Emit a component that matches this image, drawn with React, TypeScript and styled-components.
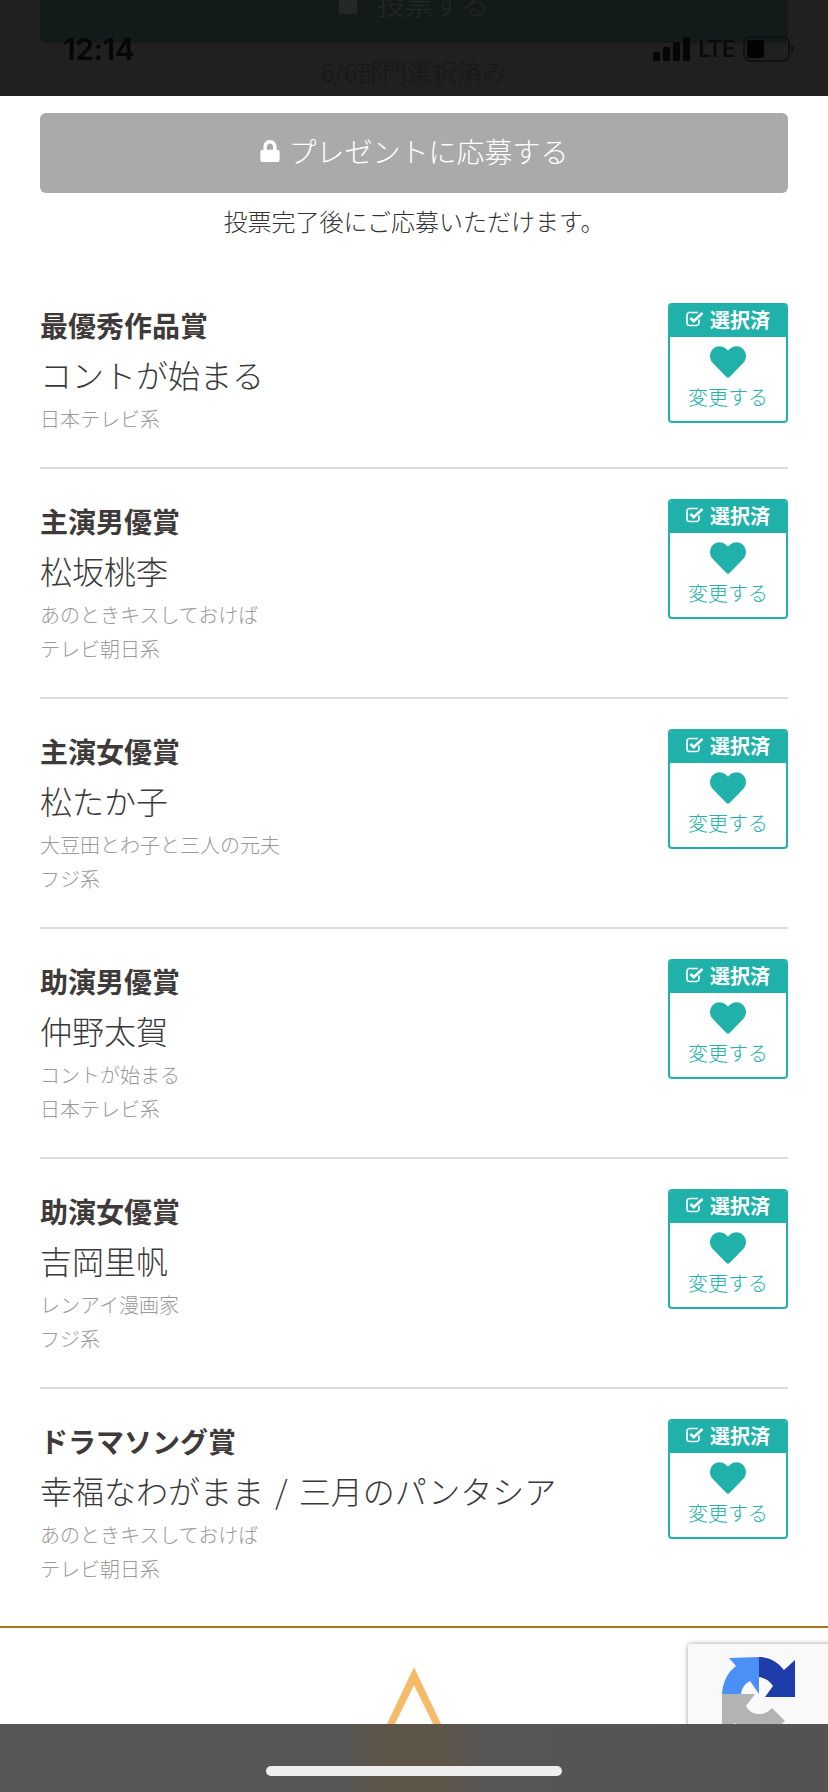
import React from "react";
import styled, { createGlobalStyle } from "styled-components";
import { FaLock, FaHeart } from "react-icons/fa";

const GlobalStyle = createGlobalStyle`
  html, body {
    margin: 0;
    padding: 0;
    background: #fff;
  }
  body {
    font-family: "Noto Sans CJK JP", "Noto Sans", sans-serif;
    font-weight: 300;
    color: #333333;
  }
  * {
    box-sizing: border-box;
  }
`;

const Page = styled.div`
  position: relative;
  width: 828px;
  height: 1792px;
  overflow: hidden;
  background: #fff;
`;

const DimmedHeader = styled.div`
  height: 96px;
  padding: 0 40px;
  background: #202020;
  overflow: hidden;
  text-align: center;
`;

const VoteButton = styled.div`
  display: flex;
  align-items: center;
  justify-content: center;
  gap: 12px;
  height: 80px;
  margin-top: -37px;
  border-radius: 6px;
  background: #131a1a;
  color: #222928;
  font-size: 28px;
`;

const ProgressText = styled.div`
  margin-top: 8px;
  font-size: 25px;
  line-height: 40px;
  color: #171717;
`;

const StatusBar = styled.div`
  position: absolute;
  top: 29px;
  left: 63px;
  right: 34px;
  height: 40px;
  display: flex;
  align-items: center;
  justify-content: space-between;
  color: #060606;
`;

const Clock = styled.span`
  font-family: "Inter", sans-serif;
  font-size: 30px;
  font-weight: 600;
  letter-spacing: -0.5px;
`;

const StatusIcons = styled.div`
  display: flex;
  align-items: center;
  gap: 8px;
`;

const Lte = styled.span`
  font-family: "Roboto", sans-serif;
  font-size: 23px;
  font-weight: 500;
  color: #0a0a0a;
`;

const Content = styled.main`
  padding: 17px 40px 0;
`;

const PresentButton = styled.button`
  display: flex;
  align-items: center;
  justify-content: center;
  gap: 7px;
  width: 100%;
  height: 80px;
  border: none;
  border-radius: 6px;
  background: #aaaaaa;
  color: #fff;
  font-family: inherit;
  font-weight: 300;
  font-size: 28px;
  padding: 0 0 4px;
`;

const Caption = styled.p`
  margin: 11px 0 35px;
  text-align: center;
  font-size: 24px;
  line-height: 34px;
`;

const AwardRow = styled.section<{ $last?: boolean }>`
  display: flex;
  justify-content: space-between;
  align-items: flex-start;
  padding: 30px 0 ${(p) => (p.$last ? "40px" : "31px")};
  border-bottom: ${(p) => (p.$last ? "none" : "2px solid #dddddd")};
`;

const AwardText = styled.div`
  min-width: 0;
`;

const AwardTitle = styled.h2`
  margin: 0;
  font-size: 28px;
  line-height: 44px;
  font-weight: 700;
  color: #3e3a39;
`;

const Nominee = styled.div`
  font-size: 32px;
  line-height: 55px;
  word-spacing: 4px;
  color: #3a3a3a;
`;

const Detail = styled.div`
  font-size: 20px;
  line-height: 34px;
  color: #999999;
`;

const Badge = styled.div`
  flex: none;
  width: 120px;
  height: 120px;
  border: 2px solid #20b2aa;
  border-radius: 4px;
  overflow: hidden;
  background: #fff;
  text-align: center;
  color: #20b2aa;
`;

const BadgeHead = styled.div`
  display: flex;
  align-items: center;
  justify-content: center;
  gap: 6px;
  height: 32px;
  padding-bottom: 4px;
  background: #20b2aa;
  color: #fff;
  font-size: 20px;
  font-weight: 700;
`;

const BadgeHeart = styled.div`
  display: flex;
  justify-content: center;
  height: 36px;
  margin-top: 7px;
  font-size: 36px;
  line-height: 0;
`;

const BadgeAction = styled.div`
  font-size: 20px;
  line-height: 30px;
  margin-top: 2px;
`;

const Footer = styled.footer`
  display: flex;
  justify-content: center;
  padding-top: 38px;
  border-top: 2px solid #b0721f;
`;

const Recaptcha = styled.div`
  position: absolute;
  top: 1644px;
  left: 688px;
  width: 160px;
  height: 148px;
  border-radius: 3px 0 0 3px;
  background: #f9f9f9;
  box-shadow: 0 0 5px rgba(0, 0, 0, 0.4);
  padding: 13px 0 0 34px;
`;

const HomeBar = styled.div`
  position: absolute;
  left: 0;
  right: 0;
  bottom: 0;
  height: 68px;
  display: flex;
  justify-content: center;
  padding-top: 42px;
  background: linear-gradient(
    90deg,
    #565656 0,
    #565656 340px,
    #5d5548 390px,
    #5d5548 440px,
    #565656 490px,
    #535353 828px
  );
`;

const HomeIndicator = styled.div`
  width: 296px;
  height: 10px;
  border-radius: 5px;
  background: #eeeeee;
`;

const SignalIcon = () => (
  <svg width="37" height="24" viewBox="0 0 37 24" fill="#060606">
    <rect x="0" y="15" width="7" height="9" rx="1.5" />
    <rect x="10" y="10" width="7" height="14" rx="1.5" />
    <rect x="20" y="5" width="7" height="19" rx="1.5" />
    <rect x="30" y="0" width="7" height="24" rx="1.5" />
  </svg>
);

const BatteryIcon = () => (
  <svg width="51" height="26" viewBox="0 0 51 26">
    <rect x="1" y="1" width="45" height="24" rx="6" fill="none" stroke="#111" strokeWidth="2" />
    <rect x="4" y="4" width="17" height="18" rx="3" fill="#030303" />
    <path d="M48 9c2 .8 3 2.2 3 4s-1 3.2-3 4z" fill="#111" />
  </svg>
);

const VoteIcon = () => (
  <svg width="26" height="22" viewBox="0 0 26 22" fill="currentColor">
    <path d="M0 4h12l3 3 3-3v18H0z" />
    <rect x="23" y="3" width="3" height="3" />
  </svg>
);

const CheckedBox = () => (
  <svg width="18" height="16" viewBox="0 0 18 16" fill="none" stroke="#fff">
    <path d="M13 8.5V12a2.5 2.5 0 0 1-2.5 2.5H3.5A2.5 2.5 0 0 1 1 12V4a2.5 2.5 0 0 1 2.5-2.5H12" strokeWidth="1.6" />
    <path d="M4.5 7l3.2 3.2L16.5 2" strokeWidth="2.6" />
  </svg>
);

const RecaptchaLogo = () => (
  <svg width="74" height="75" viewBox="0 0 74 75">
    <path d="M37 0v37L28 24c-5 3-8 6-9 13H0C1 24 6 15 14 9L7 1z" fill="#4a90f5" />
    <path d="M37 0c10 0 18 4 25 13l11-10v37H43l8-11c-3-5-8-8-14-9z" fill="#1f3cab" />
    <path d="M0 37h33l-9 12c3 6 8 8 13 8 6 0 9-2 13-6l13 13c-7 7-15 11-26 11-9 0-17-3-24-9L0 75z" fill="#b3b3b3" />
  </svg>
);

const FooterLogo = () => (
  <svg width="60" height="60" viewBox="0 0 60 60">
    <path d="M30 1 L2 60 L10 60 L30 19 L50 60 L58 60 Z" fill="#f5bb6b" />
  </svg>
);

type Award = {
  title: string;
  nominee: string;
  details: string[];
};

const awards: Award[] = [
  { title: "最優秀作品賞", nominee: "コントが始まる", details: ["日本テレビ系"] },
  { title: "主演男優賞", nominee: "松坂桃李", details: ["あのときキスしておけば", "テレビ朝日系"] },
  { title: "主演女優賞", nominee: "松たか子", details: ["大豆田とわ子と三人の元夫", "フジ系"] },
  { title: "助演男優賞", nominee: "仲野太賀", details: ["コントが始まる", "日本テレビ系"] },
  { title: "助演女優賞", nominee: "吉岡里帆", details: ["レンアイ漫画家", "フジ系"] },
  { title: "ドラマソング賞", nominee: "幸福なわがまま / 三月のパンタシア", details: ["あのときキスしておけば", "テレビ朝日系"] },
];

export default function App() {
  return (
    <Page>
      <GlobalStyle />
      <DimmedHeader>
        <VoteButton>
          <VoteIcon />
          投票する
        </VoteButton>
        <ProgressText>6/6部門選択済み</ProgressText>
      </DimmedHeader>
      <StatusBar>
        <Clock>12:14</Clock>
        <StatusIcons>
          <SignalIcon />
          <Lte>LTE</Lte>
          <BatteryIcon />
        </StatusIcons>
      </StatusBar>

      <Content>
        <PresentButton>
          <FaLock size={22} />
          プレゼントに応募する
        </PresentButton>
        <Caption>投票完了後にご応募いただけます。</Caption>

        {awards.map((award, i) => (
          <AwardRow key={award.title} $last={i === awards.length - 1}>
            <AwardText>
              <AwardTitle>{award.title}</AwardTitle>
              <Nominee>{award.nominee}</Nominee>
              {award.details.map((d) => (
                <Detail key={d}>{d}</Detail>
              ))}
            </AwardText>
            <Badge>
              <BadgeHead>
                <CheckedBox />
                選択済
              </BadgeHead>
              <BadgeHeart>
                <FaHeart />
              </BadgeHeart>
              <BadgeAction>変更する</BadgeAction>
            </Badge>
          </AwardRow>
        ))}
      </Content>

      <Footer>
        <FooterLogo />
      </Footer>
      <Recaptcha>
        <RecaptchaLogo />
      </Recaptcha>
      <HomeBar>
        <HomeIndicator />
      </HomeBar>
    </Page>
  );
}
